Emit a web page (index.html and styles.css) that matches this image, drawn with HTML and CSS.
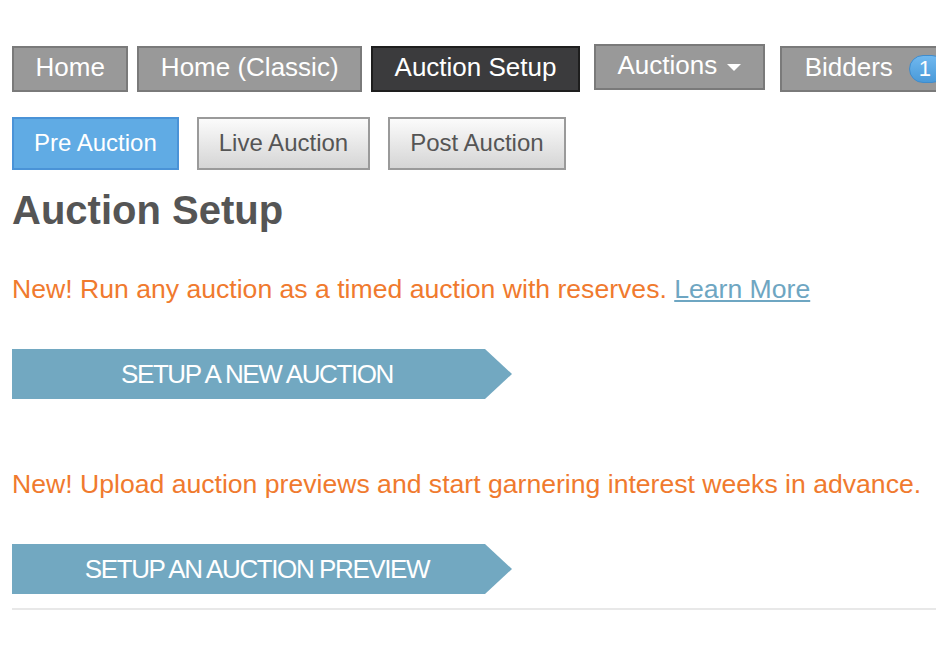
FILE: index.html
```html
<!DOCTYPE html>
<html>
<head>
    <title>Auction Setup</title>
    <link rel="stylesheet" href="styles.css">
</head>
<body>
    <div class="page">
        <div class="main-nav">
            <a class="nav-btn" href="#">Home</a>
            <a class="nav-btn" href="#">Home (Classic)</a>
            <a class="nav-btn active" href="#">Auction Setup</a>
            <a class="nav-btn dropdown" href="#">Auctions <span class="caret"></span></a>
            <a class="nav-btn bidders" href="#">Bidders <span class="badge">1</span></a>
        </div>

        <div class="sub-nav">
            <a class="tab-btn current" href="#">Pre Auction</a>
            <a class="tab-btn" href="#">Live Auction</a>
            <a class="tab-btn" href="#">Post Auction</a>
        </div>

        <h1>Auction Setup</h1>

        <p class="notice">New! Run any auction as a timed auction with reserves. <a href="#">Learn More</a></p>
        <a class="arrow-btn" href="#">SETUP A NEW AUCTION</a>

        <p class="notice second">New! Upload auction previews and start garnering interest weeks in advance.</p>
        <a class="arrow-btn" href="#">SETUP AN AUCTION PREVIEW</a>

        <hr class="divider">
    </div>
</body>
</html>
```

FILE: styles.css
```css
body {
    margin: 0;
    font-family: "Liberation Sans", Arial, sans-serif;
    background: #fff;
    overflow: hidden;
}
.page {
    padding: 46px 0 0 12px;
}
a {
    text-decoration: none;
}
.main-nav {
    display: flex;
    align-items: flex-start;
    white-space: nowrap;
}
.nav-btn {
    display: flex;
    align-items: center;
    flex-shrink: 0;
    height: 39px;
    padding: 0 21.5px 3px 21.5px;
    margin-right: 9px;
    background: #999;
    border: 2px solid #7a7a7a;
    color: #fff;
    font-size: 26px;
}
.nav-btn.active {
    background: #3b3b3d;
    border-color: #1e1e1e;
    margin-right: 14px;
}
.nav-btn.dropdown {
    margin-top: -2px;
    margin-right: 15px;
}
.caret {
    display: inline-block;
    margin-left: 10px;
    margin-top: 3px;
    border-left: 7px solid transparent;
    border-right: 7px solid transparent;
    border-top: 7px solid #fff;
}
.nav-btn.bidders {
    padding-left: 23px;
    padding-right: 0;
}
.badge {
    display: inline-block;
    margin-left: 16px;
    margin-top: 3px;
    height: 26px;
    line-height: 26px;
    padding: 0 14px 0 9px;
    border-radius: 14px;
    border: 1px solid #3f8ccd;
    background: linear-gradient(#70b8ef, #4a9ad9);
    font-size: 22px;
}
.sub-nav {
    display: flex;
    margin-top: 25px;
}
.tab-btn {
    display: block;
    height: 47px;
    line-height: 47px;
    padding: 0 20px 2px 20px;
    margin-right: 18px;
    border: 2px solid #9a9a9a;
    background: linear-gradient(#fbfbfb, #d5d5d5);
    color: #555;
    font-size: 24px;
}
.tab-btn.current {
    background: #60abe4;
    border-color: #4a93d7;
    color: #fff;
}
h1 {
    margin: 17px 0 0 0;
    font-size: 40px;
    line-height: 46px;
    color: #555;
}
.notice {
    margin: 41px 0 0 0;
    font-size: 26.6px;
    line-height: 30px;
    color: #f07a2e;
    white-space: nowrap;
}
.notice a {
    color: #6ea6c2;
    text-decoration: underline;
}
.notice.second {
    margin-top: 70px;
}
.arrow-btn {
    display: block;
    width: 490px;
    height: 50px;
    line-height: 50px;
    margin-top: 45px;
    padding-right: 10px;
    text-align: center;
    background: #72a8c1;
    color: #fff;
    font-size: 26px;
    letter-spacing: -1.4px;
    clip-path: polygon(0 0, 473px 0, 100% 50%, 473px 100%, 0 100%);
}
.divider {
    margin: 14px 0 0 0;
    border: none;
    border-top: 2px solid #e8e8e8;
}
```
